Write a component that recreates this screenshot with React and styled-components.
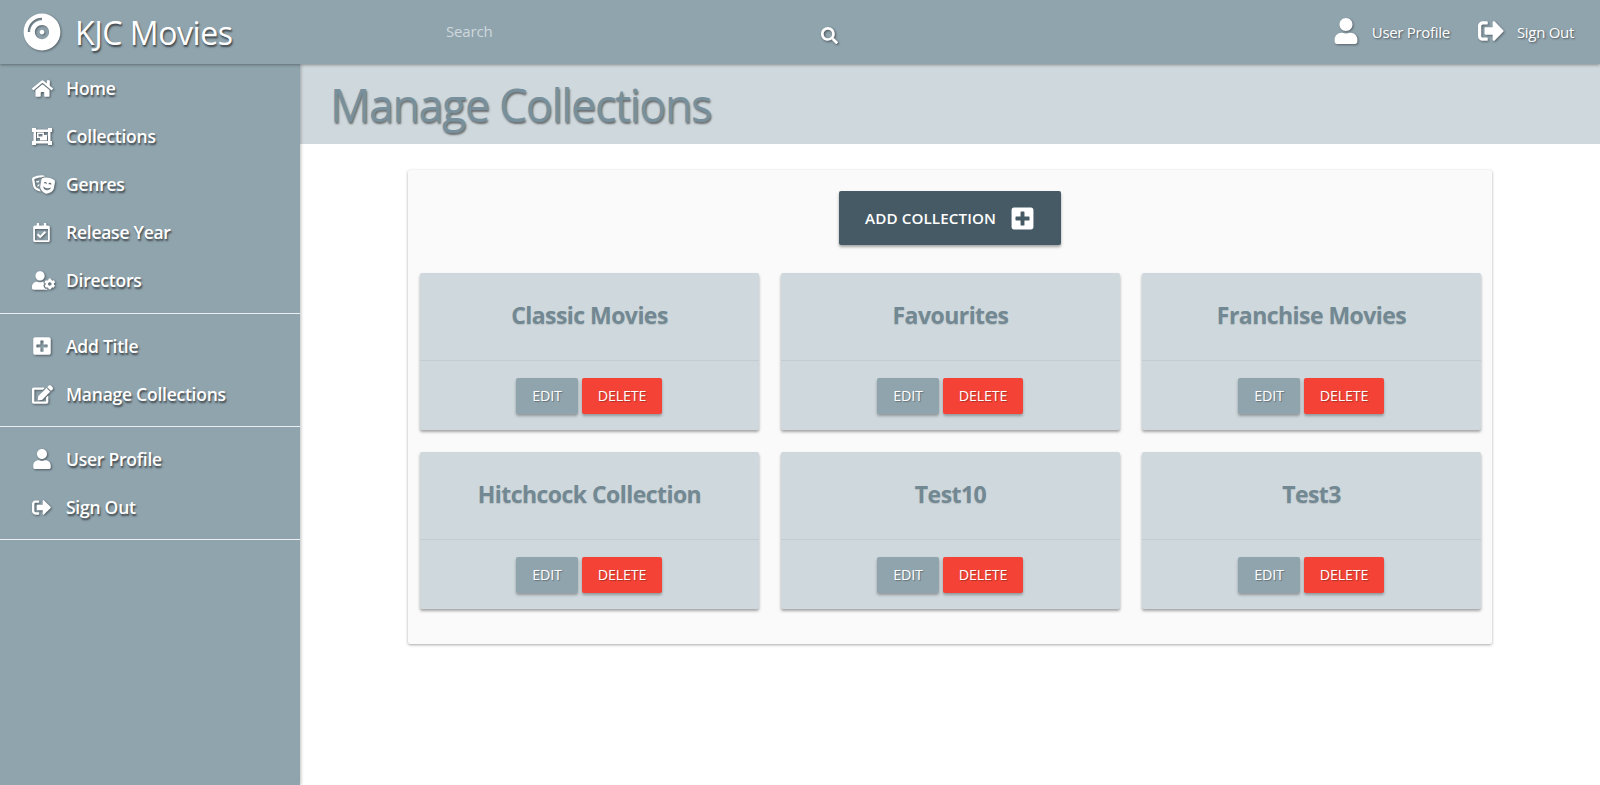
import React from "react";
import styled, { createGlobalStyle } from "styled-components";
import {
  FaCompactDisc,
  FaSearch,
  FaUser,
  FaSignOutAlt,
  FaHome,
  FaTheaterMasks,
  FaRegCalendarCheck,
  FaUserCog,
  FaPlusSquare,
  FaEdit,
} from "react-icons/fa";

const GlobalStyle = createGlobalStyle`
  html, body {
    margin: 0;
    padding: 0;
    height: 100%;
    background: #fff;
    font-family: "Open Sans", "Noto Sans", "Liberation Sans", sans-serif;
  }
  * { box-sizing: border-box; }
`;

const Page = styled.div`
  height: 785px;
  display: flex;
  flex-direction: column;
  overflow: hidden;
`;

const Navbar = styled.header`
  height: 64px;
  flex: none;
  display: flex;
  align-items: center;
  background: #90a4ae;
  box-shadow: 0 1px 3px rgba(0, 0, 0, 0.35);
  position: relative;
  z-index: 2;
`;

const Brand = styled.div`
  width: 446px;
  padding-left: 23px;
  display: flex;
  align-items: center;
  gap: 14px;
  color: #fff;
  font-size: 32px;
  letter-spacing: -0.45px;
  text-shadow: 1px 2px 2px rgba(0, 0, 0, 0.6);

  svg {
    font-size: 38px;
    filter: drop-shadow(1px 1px 1px rgba(0, 0, 0, 0.4));
  }
`;

const SearchBox = styled.div`
  width: 404px;
  padding-bottom: 3px;
  display: flex;
  justify-content: space-between;
  align-items: center;
  color: #cfd8dc;
  font-size: 15px;
  letter-spacing: -0.15px;

  svg {
    color: #fff;
    font-size: 17px;
    margin-top: 10px;
    margin-right: 12px;
    filter: drop-shadow(1px 1px 1px rgba(0, 0, 0, 0.5));
  }
`;

const NavLinks = styled.nav`
  margin-left: auto;
  padding-right: 26px;
  display: flex;
  align-items: center;
  gap: 28px;
`;

const NavLink = styled.a`
  display: flex;
  align-items: center;
  gap: ${(p) => p.$gap}px;
  color: #fff;
  font-size: 15px;
  letter-spacing: -0.3px;
  text-shadow: 1px 1px 2px rgba(0, 0, 0, 0.5);

  svg {
    font-size: 26px;
    margin-top: -2px;
    filter: drop-shadow(1px 1px 1px rgba(0, 0, 0, 0.4));
  }
`;

const Body = styled.div`
  flex: 1;
  display: flex;
  min-height: 0;
`;

const Sidebar = styled.aside`
  width: 300px;
  flex: none;
  background: #90a4ae;
  box-shadow: 1px 0 3px rgba(0, 0, 0, 0.25);
  position: relative;
  z-index: 1;
`;

const MenuGroup = styled.div`
  padding: ${(p) => p.$top}px 0 ${(p) => p.$bottom}px;
  border-bottom: 1px solid #eceff1;
`;

const MenuItem = styled.a`
  height: 48px;
  padding-left: 32px;
  display: flex;
  align-items: center;
  color: #fff;
  font-size: 17.5px;
  font-weight: 600;
  letter-spacing: -0.25px;
  text-shadow: 1px 2px 2px rgba(0, 0, 0, 0.6);
`;

const IconSlot = styled.span`
  width: 34px;
  flex: none;
  display: flex;
  justify-content: flex-start;

  svg {
    flex: none;
    font-size: ${(p) => p.$size}px;
    filter: drop-shadow(1px 1px 1px rgba(0, 0, 0, 0.45));
  }
`;

const Main = styled.main`
  flex: 1;
  min-width: 0;
`;

const TitleBand = styled.div`
  height: 80px;
  padding-left: 30px;
  display: flex;
  align-items: center;
  background: #cfd8dc;
`;

const PageTitle = styled.h1`
  margin: 0;
  color: #78909c;
  font-size: 45px;
  font-weight: 400;
  letter-spacing: -1.5px;
  text-shadow: 1px 2px 2px rgba(0, 0, 0, 0.5);
`;

const Panel = styled.section`
  width: 1084px;
  height: 474px;
  margin: 26px 0 0 108px;
  padding: 21px 12px 0;
  background: #fafafa;
  border-radius: 2px;
  box-shadow: 0 1px 3px rgba(0, 0, 0, 0.35);
`;

const AddRow = styled.div`
  display: flex;
  justify-content: center;
  margin-bottom: 28px;
`;

const AddButton = styled.button`
  width: 222px;
  height: 54px;
  border: 0;
  border-radius: 2px;
  display: flex;
  align-items: center;
  justify-content: center;
  gap: 14px;
  color: #fff;
  background: #455a64;
  font-family: inherit;
  font-size: 15.2px;
  font-weight: 600;
  letter-spacing: 0.1px;
  box-shadow: 0 2px 3px rgba(0, 0, 0, 0.35);

  svg {
    font-size: 25px;
  }
`;

const CardGrid = styled.div`
  display: grid;
  grid-template-columns: repeat(3, 339px);
  gap: 22px 22px;
`;

const Card = styled.article`
  height: 157px;
  display: flex;
  flex-direction: column;
  background: #cfd8dc;
  border-radius: 2px;
  box-shadow: 0 2px 3px rgba(0, 0, 0, 0.35);
`;

const CardTitle = styled.h2`
  height: 88px;
  margin: 0;
  padding-bottom: 3px;
  display: flex;
  align-items: center;
  justify-content: center;
  color: #728892;
  font-size: 23px;
  font-weight: 700;
  letter-spacing: -0.55px;
  text-shadow: 0 1px 1px rgba(0, 0, 0, 0.12);
  border-bottom: 1px solid #c2ccd1;
`;

const CardActions = styled.div`
  flex: 1;
  padding-right: 1px;
  display: flex;
  justify-content: center;
  align-items: center;
  gap: 4px;
`;

const ActionButton = styled.button`
  height: 36px;
  width: ${(p) => p.$width}px;
  padding: 0;
  border: 0;
  border-radius: 2px;
  color: #fff;
  background: ${(p) => p.$bg};
  font-family: inherit;
  font-size: 14.3px;
  letter-spacing: -0.2px;
  text-shadow: 1px 1px 1px rgba(0, 0, 0, 0.3);
  box-shadow: 0 2px 3px rgba(0, 0, 0, 0.3);
`;

// corner-handle frame with two offset squares, no matching icon in the packages
function CollectionsIcon() {
  return (
    <svg width="20" height="17" viewBox="0 0 20 17" fill="#fff">
      <path
        fillRule="evenodd"
        d="M0 0h4v1.5h12V0h4v4h-1.5v9H20v4h-4v-1.5H4V17H0v-4h1.5V4H0V0zM4 4v9h12V4H4z"
      />
      <path
        fillRule="evenodd"
        d="M5 4.5h7v2.5h3v5.5H8V10H5V4.5zM6.5 6v2.5h4V6h-4z"
      />
    </svg>
  );
}

const menuGroups = [
  {
    top: 0,
    bottom: 9,
    items: [
      [FaHome, "Home", 21],
      [CollectionsIcon, "Collections", 20],
      [FaTheaterMasks, "Genres", 23],
      [FaRegCalendarCheck, "Release Year", 19],
      [FaUserCog, "Directors", 23],
    ],
  },
  {
    top: 8,
    bottom: 8,
    items: [
      [FaPlusSquare, "Add Title", 20],
      [FaEdit, "Manage Collections", 21],
    ],
  },
  {
    top: 8,
    bottom: 8,
    items: [
      [FaUser, "User Profile", 20],
      [FaSignOutAlt, "Sign Out", 19],
    ],
  },
];

const collections = [
  "Classic Movies",
  "Favourites",
  "Franchise Movies",
  "Hitchcock Collection",
  "Test10",
  "Test3",
];

export default function App() {
  return (
    <Page>
      <GlobalStyle />
      <Navbar>
        <Brand>
          <FaCompactDisc />
          KJC Movies
        </Brand>
        <SearchBox>
          Search
          <FaSearch />
        </SearchBox>
        <NavLinks>
          <NavLink $gap={13}>
            <FaUser />
            User Profile
          </NavLink>
          <NavLink $gap={13}>
            <FaSignOutAlt />
            Sign Out
          </NavLink>
        </NavLinks>
      </Navbar>
      <Body>
        <Sidebar>
          {menuGroups.map((group, i) => (
            <MenuGroup key={i} $top={group.top} $bottom={group.bottom}>
              {group.items.map(([Icon, label, size]) => (
                <MenuItem key={label}>
                  <IconSlot $size={size}>
                    <Icon />
                  </IconSlot>
                  {label}
                </MenuItem>
              ))}
            </MenuGroup>
          ))}
        </Sidebar>
        <Main>
          <TitleBand>
            <PageTitle>Manage Collections</PageTitle>
          </TitleBand>
          <Panel>
            <AddRow>
              <AddButton>
                ADD COLLECTION
                <FaPlusSquare />
              </AddButton>
            </AddRow>
            <CardGrid>
              {collections.map((name) => (
                <Card key={name}>
                  <CardTitle>{name}</CardTitle>
                  <CardActions>
                    <ActionButton $bg="#90a4ae" $width={62}>EDIT</ActionButton>
                    <ActionButton $bg="#f44336" $width={80}>DELETE</ActionButton>
                  </CardActions>
                </Card>
              ))}
            </CardGrid>
          </Panel>
        </Main>
      </Body>
    </Page>
  );
}
